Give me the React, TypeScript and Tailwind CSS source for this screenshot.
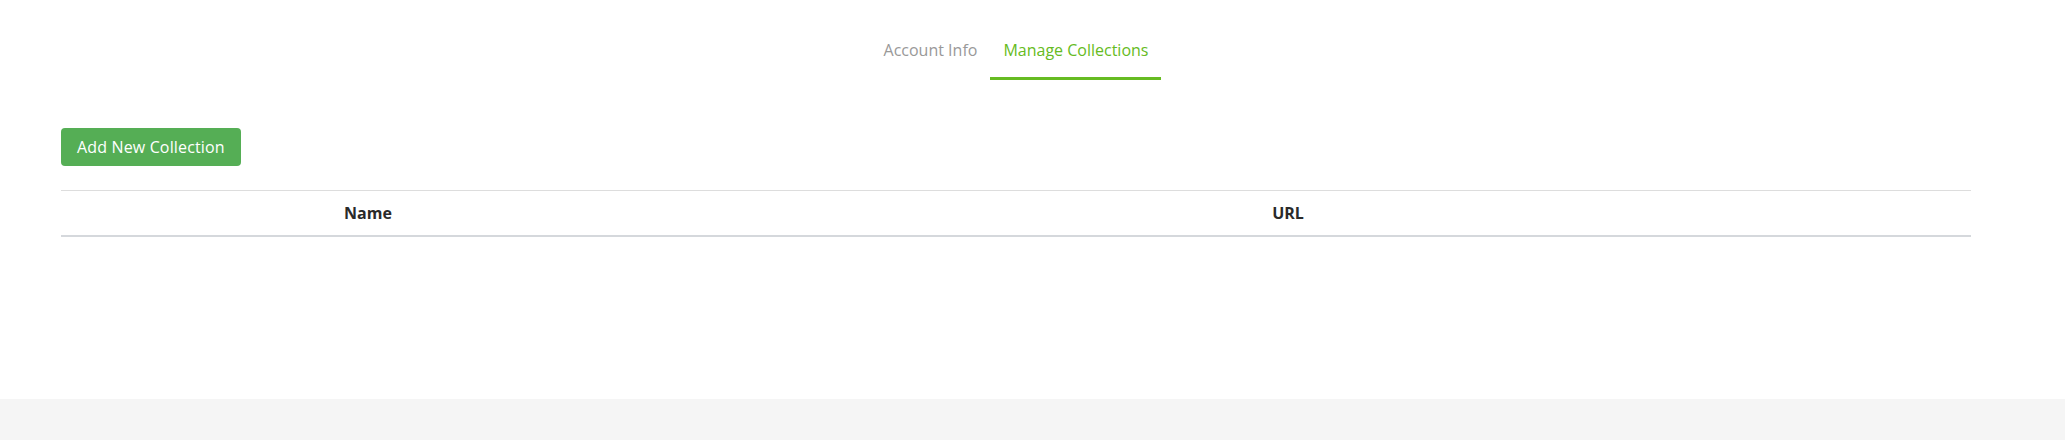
import React, { useState } from 'react'

const TABS = ['Account Info', 'Manage Collections']

export default function App() {
  const [tab, setTab] = useState(1)

  return (
    <div className="min-h-[440px] flex flex-col bg-white font-['Open_Sans',sans-serif]">
      <div className="h-[399px] pl-[61px] pr-[94px]">
        {/* Tabs */}
        <div className="flex justify-center pt-[24px]">
          {TABS.map((t, i) => (
            <button
              key={t}
              onClick={() => setTab(i)}
              className={`px-[13px] pt-[14px] pb-[15px] text-[16px] leading-[24px] border-b-[3px] ${
                i === tab ? 'text-[#66bb22] border-[#66bb22]' : 'text-[#999999] border-transparent'
              }`}
            >
              {t}
            </button>
          ))}
        </div>

        {/* Collections */}
        <div className="mt-[48px]">
          <button className="h-[38px] px-4 rounded-[4px] bg-[#55ae55] text-white text-[16px] leading-[24px] tracking-[0.15px]">
            Add New Collection
          </button>
        </div>

        <table className="w-full mt-[24px] border-collapse">
          <thead>
            <tr className="border-t border-[#dddddd] border-b-2 border-b-[#d5d8dc]">
              <th className="w-[614px] py-[10px] text-[16px] leading-[24px] font-bold text-[#2a2a2a] text-center">
                Name
              </th>
              <th className="py-[10px] text-[16px] leading-[24px] font-bold text-[#2a2a2a] text-center">
                URL
              </th>
              <th className="w-[70px]" />
            </tr>
          </thead>
          <tbody />
        </table>
      </div>
      <div className="flex-1 bg-[#f5f5f5]" />
    </div>
  )
}
